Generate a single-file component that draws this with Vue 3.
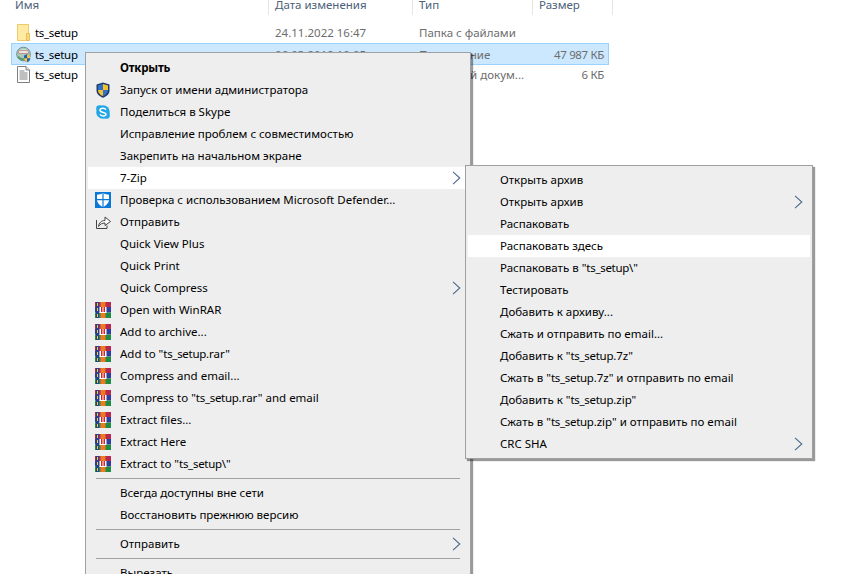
<template>
  <div class="screen">
    <!-- file list behind the menu -->
    <div class="header">
      <div class="hcol c-name">Имя</div>
      <div class="hcol c-date">Дата изменения</div>
      <div class="hcol c-type">Тип</div>
      <div class="hcol c-size">Размер</div>
    </div>
    <div class="files">
      <div v-for="f in files" :key="f.kind" class="file" :class="{ selected: f.selected }">
        <div class="c-name fname">
          <svg v-if="f.kind === 'folder'" class="ficon" viewBox="0 0 15 17">
            <path d="M1.500 .5h11v16h-11z" fill="#ffe9a3" stroke="#eccb6a" />
            <path d="M10.500 9.500v7h3v-7z" fill="#f8d775" stroke="#e0b64c" stroke-width=".8" />
          </svg>
          <svg v-else-if="f.kind === 'app'" class="ficon" viewBox="0 0 16 17">
            <circle cx="8" cy="8" r="7.300" fill="#a9cdb9" stroke="#6d8b8f" />
            <path d="M2 5a7 4.500 0 0 1 12 0z" fill="#d9dfdc" />
            <rect x="3" y="4.500" width="10" height="3" fill="#ececec" stroke="#b86a6a" stroke-width=".7" />
            <path d="M2 11q4 3.500 7 2.500" fill="none" stroke="#5f9a6a" stroke-width="2.200" />
            <path d="M8.500 9.500l3.300-1.300 3.300 1.300v3.500c0 2-1.600 3.200-3.300 3.800-1.700-.6-3.300-1.800-3.300-3.800z" fill="#1e63b8" />
            <path d="M11.800 8.200l3.300 1.300v3h-3.300zM8.500 12.500h3.300v4.300c-1.700-.6-3.300-2-3.300-4.300z" fill="#f6c343" />
          </svg>
          <svg v-else class="ficon" viewBox="0 0 15 17">
            <path d="M1.500 .5h8.500l3.500 3.500v12.500h-12z" fill="#fff" stroke="#7f7f7f" />
            <path d="M10 .5v3.500h3.500" fill="#e8e8e8" stroke="#7f7f7f" />
            <path d="M3.500 5h5M3.500 7h8M3.500 9h8M3.500 11h8M3.500 13h8" stroke="#808080" fill="none" />
          </svg>
          <span class="ts">ts_setup</span>
        </div>
        <div class="c-date muted">{{ f.date }}</div>
        <div class="c-type muted">{{ f.type }}</div>
        <div class="c-size muted">{{ f.size }}</div>
      </div>
    </div>

    <!-- main context menu -->
    <div class="menu main-menu">
      <template v-for="(item, i) in mainItems" :key="i">
        <div v-if="item.sep" class="sep"></div>
        <div v-else class="row" :class="{ hot: item.hot, bold: item.bold }">
          <span class="ico">
            <svg v-if="item.icon === 'uac'" viewBox="0 0 16 16" width="16" height="16">
              <path d="M8 .5l6.500 2v6c0 3.500-3 6-6.500 7.200C4.500 14.500 1.500 12 1.500 8.500v-6z" fill="#1c3c6e" />
              <path d="M8 2l5 1.500V8H8zM8 8v6.100C5.300 13 3 11.200 3 8z" fill="#f7c02d" />
              <path d="M8 2v6H3V3.500zM8 8h5c0 3.200-2.300 5-5 6.100z" fill="#2f72c4" />
            </svg>
            <svg v-else-if="item.icon === 'skype'" viewBox="0 0 16 16" width="16" height="16">
              <circle cx="8" cy="8" r="6.800" fill="#22a6e6" />
              <circle cx="4.500" cy="4.500" r="3.300" fill="#22a6e6" />
              <circle cx="11.500" cy="11.500" r="3.300" fill="#22a6e6" />
              <path d="M11 5.600C10.300 4.600 9.200 4.200 8 4.200c-1.700 0-3 .8-3 2.100 0 2.800 6 1.500 6 3.900 0 1-1.200 1.700-3 1.700-1.300 0-2.400-.5-3.100-1.500" fill="none" stroke="#fff" stroke-width="1.500" />
            </svg>
            <svg v-else-if="item.icon === 'defender'" viewBox="0 0 16 16" width="16" height="16">
              <rect width="16" height="16" fill="#0a78d7" />
              <path d="M8 1c1.500 1.200 4 1.700 6 1.700v5c0 3.300-3 5.800-6 7.300-3-1.500-6-4-6-7.300v-5c2 0 4.500-.5 6-1.700z" fill="#fff" />
              <path d="M7.400 1h1.200v15H7.400zM2 7h12v1.200H2z" fill="#0a78d7" />
            </svg>
            <svg v-else-if="item.icon === 'share'" viewBox="0 0 16 16" width="16" height="16">
              <path d="M1.500 6v8.500h10.500v-3" fill="none" stroke="#444" />
              <path d="M3.500 12.500c.3-3.500 3-6 6.500-6V3l5.500 4.500L10 11.500V9c-2.800 0-5 1-6.500 3.500z" fill="#fff" stroke="#444" />
            </svg>
            <svg v-else-if="item.icon === 'rar'" viewBox="0 0 16 16" width="16" height="16">
              <rect x="0" y="0" width="16" height="5" fill="#b8284e" />
              <rect x="0" y="5" width="16" height="5.500" fill="#2b3f9e" />
              <rect x="0" y="10.500" width="16" height="5.500" fill="#1f8c42" />
              <rect x="1" y="0" width="3" height="16" fill="#27408f" />
              <rect x="2" y="1" width="1" height="3" fill="#f2d13a" />
              <rect x="2" y="6" width="1" height="3" fill="#f2d13a" />
              <rect x="2" y="12" width="1" height="3" fill="#f2d13a" />
              <rect x="5.500" y="0" width="5" height="16" fill="#ee7a22" />
              <rect x="4.500" y="5" width="7" height="6" fill="#fff" />
              <rect x="6" y="5" width="1.500" height="5" fill="#d02525" />
              <rect x="8.500" y="5" width="1.500" height="5" fill="#d02525" />
            </svg>
          </span>
          <span class="label">
            <template v-for="(part, n) in splitName(item.text)" :key="n">
              <span v-if="part === 'ts_setup'" class="ts">{{ part }}</span>
              <template v-else>{{ part }}</template>
            </template>
          </span>
          <svg v-if="item.arrow" class="chev" viewBox="0 0 9 14" width="9" height="14">
            <path d="M1 .8l6.800 6.200L1 13.200" fill="none" stroke="#4d6a8c" stroke-width="1.100" />
          </svg>
        </div>
      </template>
    </div>

    <!-- 7-Zip submenu -->
    <div class="menu sub-menu">
      <div v-for="(item, i) in subItems" :key="i" class="row" :class="{ hot: item.hot }">
        <span class="label">
          <template v-for="(part, n) in splitName(item.text)" :key="n">
            <span v-if="part === 'ts_setup'" class="ts">{{ part }}</span>
            <template v-else>{{ part }}</template>
          </template>
        </span>
        <svg v-if="item.arrow" class="chev" viewBox="0 0 9 14" width="9" height="14">
          <path d="M1 .8l6.800 6.200L1 13.200" fill="none" stroke="#4d6a8c" stroke-width="1.100" />
        </svg>
      </div>
    </div>
  </div>
</template>

<script setup>
const files = [
  { kind: 'folder', date: '24.11.2022 16:47', type: 'Папка с файлами', size: '' },
  { kind: 'app', date: '06.03.2019 10:05', type: 'Приложение', size: '47 987 КБ', selected: true },
  { kind: 'doc', date: '', type: 'Текстовый докум...', size: '6 КБ' }
]

const mainItems = [
  { text: 'Открыть', bold: true },
  { text: 'Запуск от имени администратора', icon: 'uac' },
  { text: 'Поделиться в Skype', icon: 'skype' },
  { text: 'Исправление проблем с совместимостью' },
  { text: 'Закрепить на начальном экране' },
  { text: '7-Zip', arrow: true, hot: true },
  { text: 'Проверка с использованием Microsoft Defender...', icon: 'defender' },
  { text: 'Отправить', icon: 'share' },
  { text: 'Quick View Plus' },
  { text: 'Quick Print' },
  { text: 'Quick Compress', arrow: true },
  { text: 'Open with WinRAR', icon: 'rar' },
  { text: 'Add to archive...', icon: 'rar' },
  { text: 'Add to "ts_setup.rar"', icon: 'rar' },
  { text: 'Compress and email...', icon: 'rar' },
  { text: 'Compress to "ts_setup.rar" and email', icon: 'rar' },
  { text: 'Extract files...', icon: 'rar' },
  { text: 'Extract Here', icon: 'rar' },
  { text: 'Extract to "ts_setup\\"', icon: 'rar' },
  { sep: true },
  { text: 'Всегда доступны вне сети' },
  { text: 'Восстановить прежнюю версию' },
  { sep: true },
  { text: 'Отправить', arrow: true },
  { sep: true },
  { text: 'Вырезать' }
]

const subItems = [
  { text: 'Открыть архив' },
  { text: 'Открыть архив', arrow: true },
  { text: 'Распаковать' },
  { text: 'Распаковать здесь', hot: true },
  { text: 'Распаковать в "ts_setup\\"' },
  { text: 'Тестировать' },
  { text: 'Добавить к архиву...' },
  { text: 'Сжать и отправить по email...' },
  { text: 'Добавить к "ts_setup.7z"' },
  { text: 'Сжать в "ts_setup.7z" и отправить по email' },
  { text: 'Добавить к "ts_setup.zip"' },
  { text: 'Сжать в "ts_setup.zip" и отправить по email' },
  { text: 'CRC SHA', arrow: true }
]

// the file name runs a bit wide in this font, so it gets its own span
const splitName = (text) => text.split(/(ts_setup)/).filter(Boolean)
</script>

<style>
html, body {
  margin: 0;
  background: #fff;
}
</style>

<style scoped>
.screen {
  position: relative;
  width: 863px;
  height: 574px;
  overflow: hidden;
  background: #fff;
  font-family: "Noto Sans", "Open Sans", sans-serif;
  font-size: 11.5px;
  color: #000;
}

.header {
  display: flex;
  height: 18px;
  margin-top: -3px;
  padding-left: 11px;
  margin-bottom: 7px;
  color: #4c607a;
}
.hcol {
  box-sizing: border-box;
  padding-left: 4px;
  line-height: 15px;
  border-right: 1px solid #e5e5e5;
}

.c-name { width: 258px; flex: none; }
.c-date { width: 144px; flex: none; }
.c-type { width: 120px; flex: none; }
.c-size { width: 80px; flex: none; }

.hcol.c-date, .hcol.c-type, .hcol.c-size { padding-left: 6px; }

.files {
  padding-left: 11px;
}
.file {
  display: flex;
  align-items: center;
  box-sizing: border-box;
  width: 598px;
  height: 21px;
  border: 1px solid transparent;
}
.file.selected {
  height: 22px;
  margin-bottom: -1px;
  background: #cce8ff;
  border-color: #99d1ff;
}
.fname {
  display: flex;
  align-items: center;
  gap: 4px;
  padding-left: 5px;
  box-sizing: border-box;
  margin-left: -1px;
}
.ficon {
  width: 15px;
  height: 17px;
  flex: none;
}
.ts {
  letter-spacing: -0.3px;
}
.muted {
  color: #6d6d6d;
  box-sizing: border-box;
  padding-left: 6px;
}
.file .c-size {
  text-align: right;
  padding-right: 7px;
  margin-left: -2px;
  letter-spacing: -0.35px;
}

.menu {
  position: absolute;
  box-sizing: border-box;
  background: #eeeeee;
  border: 1px solid #a0a0a0;
  box-shadow: 2px 2px 1px rgba(0, 0, 0, 0.4);
}
.main-menu {
  left: 85px;
  top: 52px;
  width: 386px;
  padding: 4px 2px;
}
.sub-menu {
  left: 465px;
  top: 165px;
  width: 348px;
  padding: 3px 2px;
}

.row {
  display: flex;
  align-items: center;
  height: 22px;
  white-space: nowrap;
}
.row.hot {
  background: #fff;
}
.row.bold {
  font-weight: 700;
  letter-spacing: -0.2px;
}
.main-menu .row {
  padding-left: 7px;
}
.sub-menu .row {
  padding-left: 32px;
}
.ico {
  flex: none;
  width: 16px;
  height: 16px;
  margin-right: 9px;
}
.ico svg {
  display: block;
}
.label {
  flex: 1;
  padding-bottom: 2px;
}
.chev {
  flex: none;
  margin-right: 7px;
}
.sep {
  height: 1px;
  margin: 3px 8px 3px 8px;
  background: #a0a0a0;
}
</style>
